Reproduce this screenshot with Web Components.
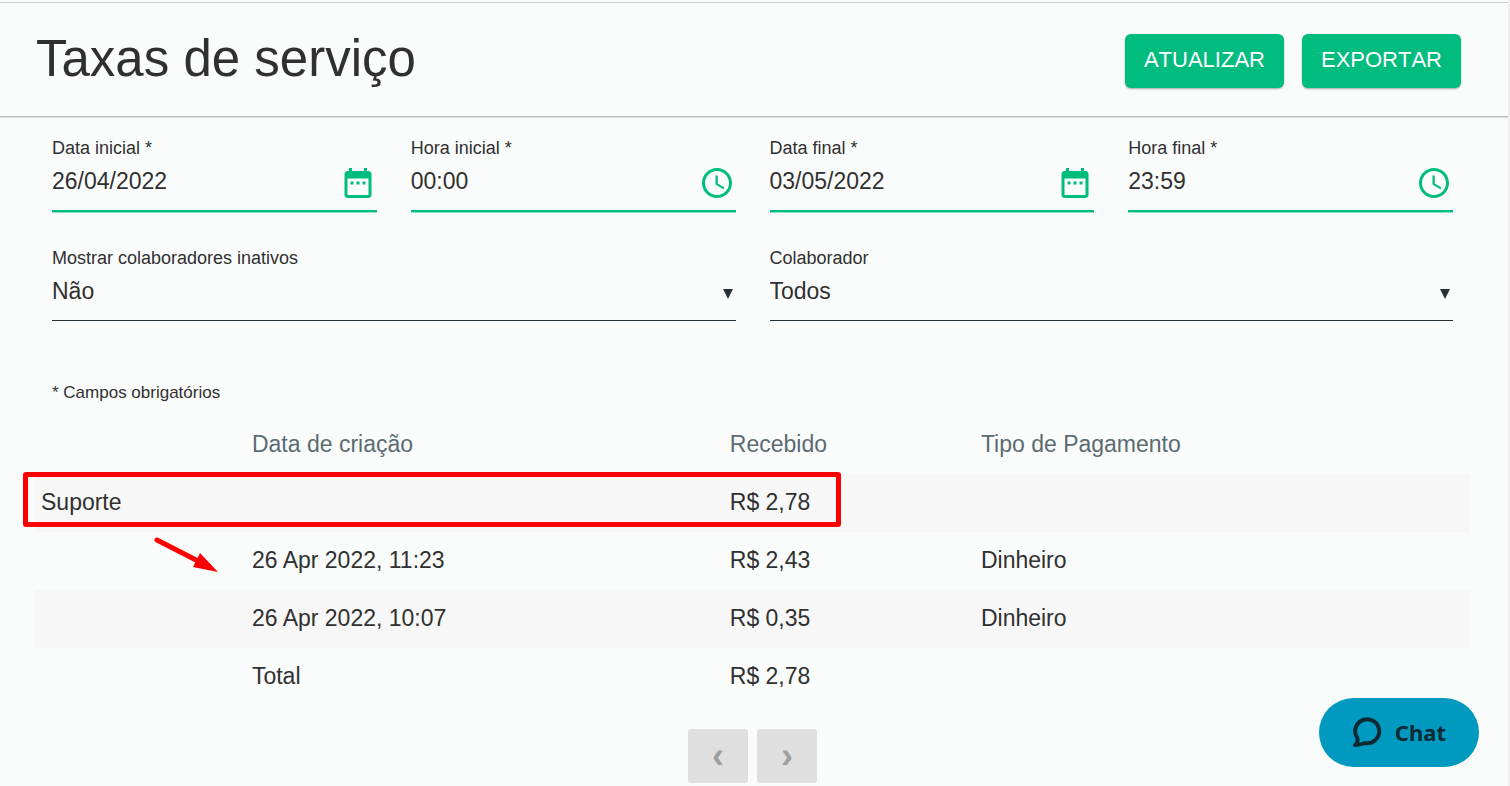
<!DOCTYPE html>
<html lang="pt-BR">
<head>
<meta charset="utf-8">
<meta name="viewport" content="width=device-width, initial-scale=1">
<title>Taxas de serviço</title>
<style>
    body {
        margin: 0;
        background: #fafcfb;
        color: #303030;
        font-family: "Liberation Sans", Arial, sans-serif;
        font-size: 23px;
    }
</style>
</head>
<body>
<taxas-page></taxas-page>

<script>
const ICONS = {
    date: 'M9 11H7v2h2v-2zm4 0h-2v2h2v-2zm4 0h-2v2h2v-2zm2-7h-1V2h-2v2H8V2H6v2H5c-1.11 0-1.99.9-1.99 2L3 20c0 1.1.89 2 2 2h14c1.1 0 2-.9 2-2V6c0-1.1-.9-2-2-2zm0 16H5V9h14v11z',
    time: 'M11.99 2C6.47 2 2 6.48 2 12s4.47 10 9.99 10C17.52 22 22 17.52 22 12S17.52 2 11.99 2zM12 20c-4.42 0-8-3.58-8-8s3.58-8 8-8 8 3.58 8 8-3.58 8-8 8zm.5-13H11v6l5.25 3.15.75-1.23-4.5-2.67z'
};

class ActionButton extends HTMLElement {
    constructor() {
        super();
        this.attachShadow({ mode: 'open' }).innerHTML = `
            <style>
                :host { display: block; }
                button {
                    display: block;
                    height: 54px;
                    padding: 0 19px 2px;
                    border: 0;
                    border-radius: 6px;
                    background: #00bc7f;
                    box-shadow: 0 1px 2px rgba(0,0,0,0.35);
                    color: #fff;
                    font: inherit;
                    font-size: 22px;
                    font-kerning: none;
                    text-transform: uppercase;
                    cursor: pointer;
                }
            </style>
            <button type="button"><slot></slot></button>
        `;
    }
}

class PageHeader extends HTMLElement {
    constructor() {
        super();
        this.attachShadow({ mode: 'open' }).innerHTML = `
            <style>
                :host { display: block; }
                header {
                    display: flex;
                    align-items: center;
                    justify-content: space-between;
                    margin-top: 2px;
                    padding: 22px 47px 20px 36px;
                    border-top: 1px solid #cfd1d0;
                    border-bottom: 1px solid #c0c2c1;
                    box-shadow: 0 1px 1px rgba(0,0,0,0.12);
                }
                h1 {
                    margin: 0;
                    padding-bottom: 4px;
                    font-size: 51px;
                    font-weight: 400;
                    line-height: 67px;
                }
                .actions { display: flex; gap: 18px; }
            </style>
            <header>
                <h1><slot name="title"></slot></h1>
                <div class="actions"><slot></slot></div>
            </header>
        `;
    }
}

class PickerField extends HTMLElement {
    constructor() {
        super();
        this.attachShadow({ mode: 'open' });
    }

    connectedCallback() {
        const label = this.getAttribute('label');
        this.shadowRoot.innerHTML = `
            <style>
                :host { display: block; min-width: 0; }
                label {
                    display: block;
                    font-size: 18px;
                    line-height: 22px;
                }
                .control {
                    display: flex;
                    align-items: center;
                    height: 51px;
                    border-bottom: 2px solid #00bc7f;
                    box-shadow: 0 1px 0 #8adfc2;
                }
                input {
                    flex: 1;
                    min-width: 0;
                    height: 44px;
                    box-sizing: border-box;
                    margin-bottom: 7px;
                    padding: 0;
                    border: 0;
                    outline: 0;
                    background: none;
                    color: inherit;
                    font: inherit;
                }
                button {
                    display: flex;
                    margin: 0 1px 4px 0;
                    padding: 0;
                    border: 0;
                    background: none;
                    color: #00bc7f;
                    cursor: pointer;
                }
                svg { width: 36px; height: 36px; fill: currentColor; }
            </style>
            <label for="field">${label} *</label>
            <div class="control">
                <input id="field" type="text" required value="${this.getAttribute('value')}">
                <button type="button" aria-label="Escolher ${label.toLowerCase()}">
                    <svg viewBox="0 0 24 24" aria-hidden="true"><path d="${ICONS[this.getAttribute('kind')]}"/></svg>
                </button>
            </div>
        `;
    }
}

class SelectField extends HTMLElement {
    constructor() {
        super();
        this.attachShadow({ mode: 'open' });
    }

    connectedCallback() {
        this.shadowRoot.innerHTML = `
            <style>
                :host { display: block; min-width: 0; }
                label {
                    display: block;
                    font-size: 18px;
                    line-height: 22px;
                }
                .control {
                    display: grid;
                    align-items: center;
                    height: 51px;
                    border-bottom: 1px solid #263238;
                }
                select, svg { grid-area: 1 / 1; }
                select {
                    appearance: none;
                    width: 100%;
                    height: 44px;
                    margin-bottom: 7px;
                    padding: 0;
                    border: 0;
                    outline: 0;
                    background: none;
                    color: inherit;
                    font: inherit;
                }
                svg {
                    justify-self: end;
                    width: 10px;
                    height: 10px;
                    margin: 0 3px 2px 0;
                    fill: #263238;
                    pointer-events: none;
                }
            </style>
            <label for="field">${this.getAttribute('label')}</label>
            <div class="control">
                <select id="field"><option>${this.getAttribute('value')}</option></select>
                <svg viewBox="0 0 10 10" aria-hidden="true"><path d="M0 0h10L5 10z"/></svg>
            </div>
        `;
    }
}

class FilterForm extends HTMLElement {
    constructor() {
        super();
        this.attachShadow({ mode: 'open' }).innerHTML = `
            <style>
                :host { display: block; padding: 20px 55px 0 52px; }
                form { display: grid; gap: 35px; }
                .row {
                    display: grid;
                    grid-auto-flow: column;
                    grid-auto-columns: minmax(0, 1fr);
                    gap: 34px;
                }
                p {
                    margin: 61px 0 0;
                    font-size: 17px;
                    line-height: 22px;
                }
            </style>
            <form>
                <div class="row">
                    <picker-field kind="date" label="Data inicial" value="26/04/2022"></picker-field>
                    <picker-field kind="time" label="Hora inicial" value="00:00"></picker-field>
                    <picker-field kind="date" label="Data final" value="03/05/2022"></picker-field>
                    <picker-field kind="time" label="Hora final" value="23:59"></picker-field>
                </div>
                <div class="row">
                    <select-field label="Mostrar colaboradores inativos" value="Não"></select-field>
                    <select-field label="Colaborador" value="Todos"></select-field>
                </div>
            </form>
            <p>* Campos obrigatórios</p>
        `;
    }
}

class FeesTable extends HTMLElement {
    constructor() {
        super();
        this.attachShadow({ mode: 'open' });
    }

    set rows(rows) {
        this.shadowRoot.innerHTML = `
            <style>
                :host {
                    display: block;
                    position: relative;
                    margin: 12px 38px 0 35px;
                }
                table {
                    width: 100%;
                    border-collapse: collapse;
                    table-layout: fixed;
                }
                th, td {
                    height: 58px;
                    padding: 0 6px 2px;
                    box-sizing: border-box;
                    text-align: left;
                    font-weight: 400;
                }
                th { color: #5b6b72; }
                tbody tr:nth-child(odd) { background: #f7f7f7; }
                .name { width: 14.7%; }
                .date { width: 33.3%; }
                .value { width: 17.5%; }
                /* marks drawn over the table */
                .frame {
                    position: absolute;
                    top: 56px;
                    left: -12px;
                    width: 57%;
                    height: 55px;
                    box-sizing: border-box;
                    border: 5px solid #f00;
                    border-radius: 3px;
                    pointer-events: none;
                }
                .arrow {
                    position: absolute;
                    top: 119px;
                    left: 117px;
                    width: 68px;
                    height: 38px;
                    pointer-events: none;
                }
            </style>
            <table>
                <thead>
                    <tr>
                        <th class="name"></th>
                        <th class="date" scope="col">Data de criação</th>
                        <th class="value" scope="col">Recebido</th>
                        <th scope="col">Tipo de Pagamento</th>
                    </tr>
                </thead>
                <tbody>
                    ${rows.map(row => `
                        <tr>${row.map(cell => `<td>${cell}</td>`).join('')}</tr>
                    `).join('')}
                </tbody>
            </table>
            <div class="frame"></div>
            <svg class="arrow" viewBox="0 0 68 38" aria-hidden="true">
                <path d="M5 5L46 26" stroke="#f00" stroke-width="5" stroke-linecap="round"/>
                <path d="M48 18l18 19-25-5z" fill="#f00"/>
            </svg>
        `;
    }
}

class PageNav extends HTMLElement {
    constructor() {
        super();
        this.attachShadow({ mode: 'open' }).innerHTML = `
            <style>
                :host { display: block; margin: 23px 38px 0 35px; }
                nav { display: flex; justify-content: center; gap: 9px; }
                button {
                    width: 60px;
                    height: 54px;
                    padding: 0;
                    border: 0;
                    border-radius: 3px;
                    background: #dfdfdf;
                    color: #9f9f9f;
                    font: inherit;
                    font-size: 36px;
                    font-weight: 700;
                    line-height: 50px;
                }
            </style>
            <nav aria-label="Paginação">
                <button type="button" disabled aria-label="Anterior">‹</button>
                <button type="button" disabled aria-label="Próxima">›</button>
            </nav>
        `;
    }
}

class ChatButton extends HTMLElement {
    constructor() {
        super();
        this.attachShadow({ mode: 'open' }).innerHTML = `
            <style>
                :host { position: fixed; right: 31px; bottom: 19px; }
                button {
                    display: flex;
                    align-items: center;
                    gap: 12px;
                    height: 69px;
                    padding: 0 33px 2px;
                    border: 0;
                    border-radius: 35px;
                    background: #009ac0;
                    color: #0b2a33;
                    font: 700 22px "Noto Sans", "Open Sans", sans-serif;
                    cursor: pointer;
                }
                svg { width: 31px; height: 32px; }
            </style>
            <button type="button">
                <svg viewBox="0 0 31 32" fill="none" stroke="currentColor" stroke-width="4" stroke-linejoin="round" aria-hidden="true">
                    <path d="M5 21.500A12 12 0 1 1 13 27Q8 29 3 29Q7 26 5 21.500z"/>
                </svg>
                <slot></slot>
            </button>
        `;
    }
}

class TaxasPage extends HTMLElement {
    constructor() {
        super();
        this.attachShadow({ mode: 'open' }).innerHTML = `
            <style>
                :host {
                    display: flow-root;
                    box-sizing: border-box;
                    min-height: 100vh;
                    border-right: 2px solid #f1f1f1;
                }
            </style>
            <page-header>
                <span slot="title">Taxas de serviço</span>
                <action-button>Atualizar</action-button>
                <action-button>Exportar</action-button>
            </page-header>
            <main>
                <filter-form></filter-form>
                <fees-table></fees-table>
                <page-nav></page-nav>
            </main>
            <chat-button>Chat</chat-button>
        `;
    }

    connectedCallback() {
        this.shadowRoot.querySelector('fees-table').rows = [
            ['Suporte', '', 'R$ 2,78', ''],
            ['', '26 Apr 2022, 11:23', 'R$ 2,43', 'Dinheiro'],
            ['', '26 Apr 2022, 10:07', 'R$ 0,35', 'Dinheiro'],
            ['', 'Total', 'R$ 2,78', '']
        ];
    }
}

customElements.define('action-button', ActionButton);
customElements.define('page-header', PageHeader);
customElements.define('picker-field', PickerField);
customElements.define('select-field', SelectField);
customElements.define('filter-form', FilterForm);
customElements.define('fees-table', FeesTable);
customElements.define('page-nav', PageNav);
customElements.define('chat-button', ChatButton);
customElements.define('taxas-page', TaxasPage);
</script>
</body>
</html>
